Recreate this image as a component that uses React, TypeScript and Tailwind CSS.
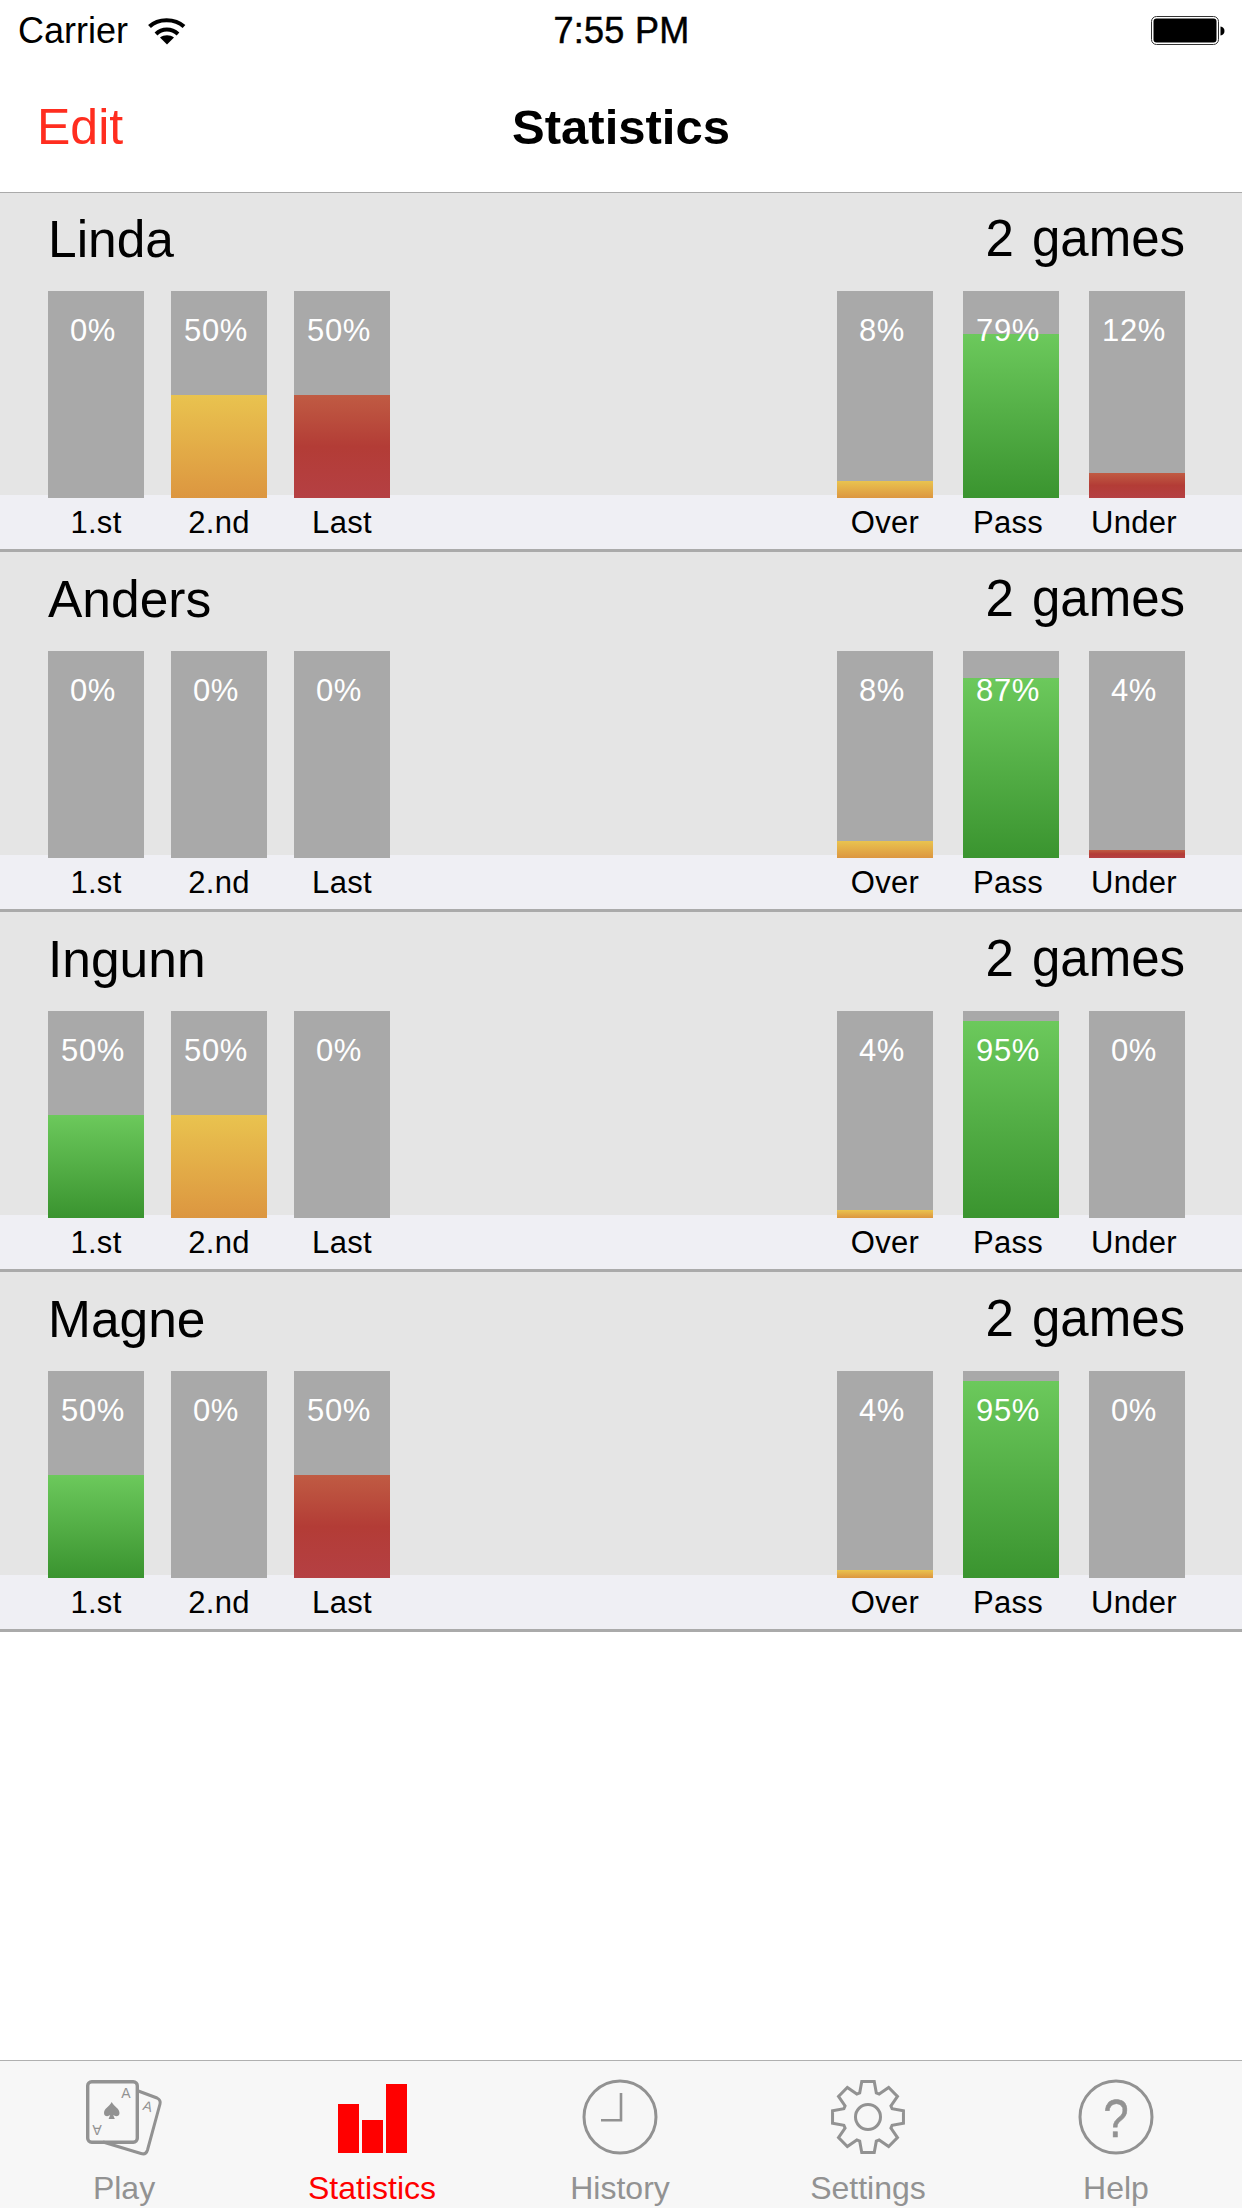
const SANS = "font-['Liberation_Sans',Arial,sans-serif]";

type Bar = { label: string; pct: number; kind: "green" | "yellow" | "red" };

const GRADIENTS = {
  green: "bg-gradient-to-b from-[#6cc95c] to-[#3a942f]",
  yellow: "bg-gradient-to-b from-[#e9c34f] to-[#dc9640]",
  red: "bg-gradient-to-b from-[#c05b43] via-[#b33c36] to-[#b54043]",
};

function place(a: number, b: number, c: number): Bar[] {
  return [
    { label: "1.st", pct: a, kind: "green" },
    { label: "2.nd", pct: b, kind: "yellow" },
    { label: "Last", pct: c, kind: "red" },
  ];
}
function par(a: number, b: number, c: number): Bar[] {
  return [
    { label: "Over", pct: a, kind: "yellow" },
    { label: "Pass", pct: b, kind: "green" },
    { label: "Under", pct: c, kind: "red" },
  ];
}

const PLAYERS = [
  { name: "Linda", left: place(0, 50, 50), right: par(8, 79, 12) },
  { name: "Anders", left: place(0, 0, 0), right: par(8, 87, 4) },
  { name: "Ingunn", left: place(50, 50, 0), right: par(4, 95, 0) },
  { name: "Magne", left: place(50, 0, 50), right: par(4, 95, 0) },
];

function BarView({ bar }: { bar: Bar }) {
  const h = Math.round(bar.pct * 2.07);
  return (
    <div className="relative z-10 h-[207px] w-[96px] bg-[#a9a9a9]">
      {bar.pct > 0 && (
        <div className={`absolute bottom-0 left-0 right-0 ${GRADIENTS[bar.kind]}`} style={{ height: h }} />
      )}
      <div className="absolute left-0 right-[6px] top-[22px] text-center text-[31px] leading-[36px] tracking-[0.6px] text-white">
        {bar.pct}%
      </div>
    </div>
  );
}

function Group({ bars, gap }: { bars: Bar[]; gap: string }) {
  return <div className={`flex ${gap}`}>{bars.map((b) => <BarView key={b.label} bar={b} />)}</div>;
}

function Labels({ bars, gap, shift }: { bars: Bar[]; gap: string; shift?: boolean }) {
  return (
    <div className={`flex ${gap}`}>
      {bars.map((b, i) => (
        <div
          key={b.label}
          className={`w-[96px] text-center text-[31px] leading-[36px] tracking-[0.3px] text-black ${shift && i > 0 ? "pr-[6px]" : ""}`}
        >
          {b.label}
        </div>
      ))}
    </div>
  );
}

function PlayerRow({ p }: { p: (typeof PLAYERS)[number] }) {
  return (
    <div className="flex h-[360px] flex-col border-b-[3px] border-[#aaaaaa] bg-[#e5e5e5] pt-px first:h-[359px] first:pt-0">
      <div className="flex h-[98px] items-start justify-between pl-[48px] pr-[57px] pt-[17px] text-black">
        <span className="text-[51.5px] leading-[58px]">{p.name}</span>
        <span className="text-[51px] leading-[58px] [word-spacing:4px]">2 games</span>
      </div>
      <div className="flex justify-between pl-[48px] pr-[57px]">
        <Group bars={p.left} gap="gap-[27px]" />
        <Group bars={p.right} gap="gap-[30px]" />
      </div>
      <div className="-mt-[3px] flex flex-1 justify-between bg-[#efeff4] pl-[48px] pr-[57px] pt-[10px]">
        <Labels bars={p.left} gap="gap-[27px]" />
        <Labels bars={p.right} gap="gap-[30px]" shift />
      </div>
    </div>
  );
}

function Wifi() {
  return (
    <svg width="38" height="28" viewBox="0 0 38 28" className="block">
      <path d="M1.5 9.5 C10 1 27 1 36 9.5" fill="none" stroke="#000" strokeWidth="4" />
      <path d="M8 17 C14 11 23.5 11 30 17" fill="none" stroke="#000" strokeWidth="4" />
      <path d="M19 27.5 L12 20.5 C16 17.5 22 17.5 26 20.5 Z" fill="#000" />
    </svg>
  );
}

function Battery() {
  return (
    <svg width="74" height="30" viewBox="0 0 74 30" className="block">
      <rect x="0.5" y="0.5" width="67" height="28" rx="5" fill="none" stroke="#333" strokeWidth="1" />
      <rect x="2.5" y="2.5" width="63" height="24" rx="3" fill="#000" />
      <path d="M69.5 10.5 C72 11 73.5 12.5 73.5 15 C73.5 17.5 72 19 69.5 19.5 Z" fill="#000" />
    </svg>
  );
}

const GREY = "#929292";

function PlayIcon() {
  return (
    <svg width="80" height="80" viewBox="0 0 80 80" className="block">
      <path d="M53 13.5 L73 21 Q77 23 76 27 L63.5 73 Q62 78 57 76.5 L19 65" fill="none" stroke={GREY} strokeWidth="3" />
      <rect x="3.7" y="4.7" width="49.6" height="60.6" rx="4" fill="none" stroke={GREY} strokeWidth="3.4" />
      <path d="M27.7 25 C30.5 30 35.5 31.5 35.5 36 C35.5 39.5 31.5 40 29.2 38 L30.8 42 L24.6 42 L26.2 38 C23.9 40 20 39.5 20 36 C20 31.5 25 30 27.7 25 Z" fill={GREY} />
      <text x="42" y="21" textAnchor="middle" fontSize="14" fill={GREY} fontFamily="Liberation Sans, Arial, sans-serif">A</text>
      <text transform="translate(13 48) rotate(180)" textAnchor="middle" fontSize="14" fill={GREY} fontFamily="Liberation Sans, Arial, sans-serif">A</text>
      <text transform="translate(62.5 34) rotate(15)" textAnchor="middle" fontSize="14" fill={GREY} fontFamily="Liberation Sans, Arial, sans-serif">A</text>
    </svg>
  );
}

function StatsIcon() {
  return (
    <svg width="80" height="80" viewBox="0 0 80 80" className="block">
      <rect x="6" y="27" width="21" height="49" fill="#ff0000" />
      <rect x="30" y="43" width="21" height="33" fill="#ff0000" />
      <rect x="54" y="7" width="21" height="69" fill="#ff0000" />
    </svg>
  );
}

function ClockIcon() {
  return (
    <svg width="80" height="80" viewBox="0 0 80 80" className="block">
      <circle cx="40" cy="40" r="36" fill="none" stroke={GREY} strokeWidth="3" />
      <path d="M41 16 L41 43.2 L21 43.2" fill="none" stroke={GREY} strokeWidth="2.6" />
    </svg>
  );
}

function gearPath() {
  const cx = 40;
  const cy = 40;
  const pts: string[] = [];
  const teeth = 8;
  for (let i = 0; i < teeth; i++) {
    const a = (i * 2 * Math.PI) / teeth - Math.PI / 2;
    const p = (r: number, d: number) => {
      const t = a + (d * Math.PI) / 180;
      return `${(cx + r * Math.cos(t)).toFixed(2)} ${(cy + r * Math.sin(t)).toFixed(2)}`;
    };
    pts.push(p(25.5, -19), p(36, -10), p(36, 10), p(25.5, 19));
  }
  return `M${pts.join(" L")} Z`;
}

function GearIcon() {
  return (
    <svg width="80" height="80" viewBox="0 0 80 80" className="block">
      <path d={gearPath()} fill="none" stroke={GREY} strokeWidth="3" strokeLinejoin="miter" />
      <circle cx="40" cy="40" r="12.5" fill="none" stroke={GREY} strokeWidth="3" />
    </svg>
  );
}

function HelpIcon() {
  return (
    <svg width="80" height="80" viewBox="0 0 80 80" className="block">
      <circle cx="40" cy="40" r="36" fill="none" stroke={GREY} strokeWidth="3" />
      <text transform="translate(40 60) scale(0.85 1)" textAnchor="middle" fontSize="53" fill={GREY} stroke={GREY} strokeWidth="0.6" fontFamily="Liberation Sans, Arial, sans-serif">?</text>
    </svg>
  );
}

const TABS = [
  { label: "Play", icon: <PlayIcon />, active: false },
  { label: "Statistics", icon: <StatsIcon />, active: true },
  { label: "History", icon: <ClockIcon />, active: false },
  { label: "Settings", icon: <GearIcon />, active: false },
  { label: "Help", icon: <HelpIcon />, active: false },
];

export default function App() {
  return (
    <div className={`${SANS} flex h-[2208px] w-[1242px] flex-col overflow-hidden bg-white`}>
      <div className="flex h-[60px] shrink-0 items-center justify-between pl-[18px] pr-[17px] pt-[2px] text-[36px] text-black">
        <div className="flex w-[400px] items-center gap-[20px]">
          <span className="leading-[60px]">Carrier</span>
          <Wifi />
        </div>
        <span className="leading-[60px] tracking-[0.3px] [-webkit-text-stroke:0.5px_black]">7:55 PM</span>
        <div className="flex w-[400px] justify-end">
          <Battery />
        </div>
      </div>
      <div className="relative flex h-[132px] shrink-0 items-center justify-center pt-[2px]">
        <span className="absolute left-[37px] top-[38px] text-[50px] leading-[58px] text-[#ff2d1f]">Edit</span>
        <span className="text-[49px] font-bold leading-[58px] text-black">Statistics</span>
      </div>
      <div className="h-px shrink-0 bg-[#aaaaaa]" />
      <div className="flex flex-col">
        {PLAYERS.map((p) => <PlayerRow key={p.name} p={p} />)}
      </div>
      <div className="flex-1" />
      <div className="flex h-[148px] shrink-0 border-t border-[#b0b0b0] bg-[#f7f7f7]">
        {TABS.map((t) => (
          <div key={t.label} className="flex w-[248px] flex-col items-center">
            <div className="flex h-[109px] items-start justify-center pt-[16px]">{t.icon}</div>
            <span className={`text-[32px] leading-[36px] ${t.active ? "text-[#ff0000]" : "text-[#929292]"}`}>{t.label}</span>
          </div>
        ))}
      </div>
    </div>
  );
}
